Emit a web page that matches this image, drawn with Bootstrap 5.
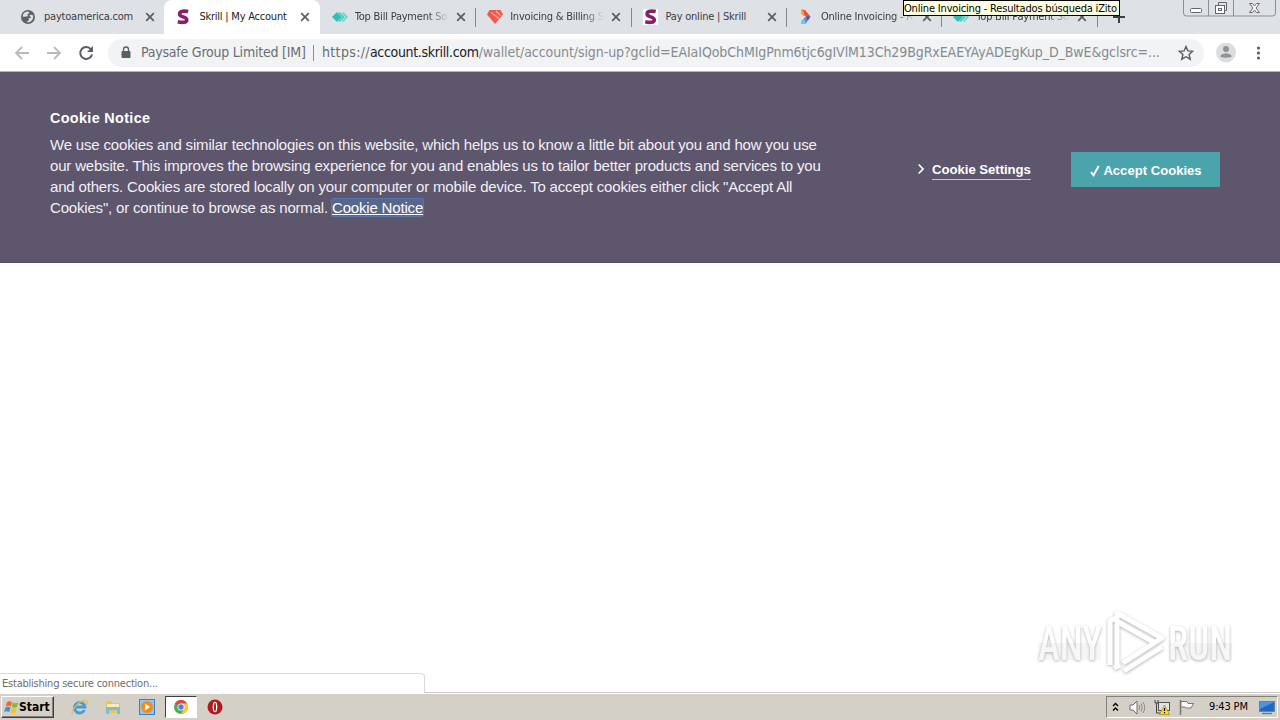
<!DOCTYPE html>
<html lang="en">
<head>
    <meta charset="UTF-8">
    <meta name="viewport" content="width=device-width, initial-scale=1.0">
    <title>Skrill | My Account</title>
    <link href="https://cdn.jsdelivr.net/npm/bootstrap@5.3.0/dist/css/bootstrap.min.css" rel="stylesheet">
    <style>
        body {
            width: 1280px;
            height: 720px;
            overflow: hidden;
            background: #fff;
            font-family: "DejaVu Sans Condensed", "DejaVu Sans", sans-serif;
            font-stretch: condensed;
        }
        svg {
            display: block;
            flex: none;
        }
        /* tab strip */
        .tab-strip {
            height: 34px;
            background: #dee1e6;
            padding-left: 9px;
        }
        .browser-tab {
            width: 155.4px;
            height: 34px;
            flex: none;
            padding-left: 12px;
            font-size: 11px;
            color: #3c4043;
            position: relative;
        }
        .browser-tab.current {
            background: #fff;
            border-radius: 8px 8px 0 0;
            color: #222;
        }
        .browser-tab.divided::after {
            content: "";
            position: absolute;
            right: -1px;
            top: 8px;
            width: 1px;
            height: 19px;
            background: #85888d;
        }
        .tab-icon {
            width: 16px;
        }
        .tab-title {
            width: 94px;
            margin-left: 7px;
            margin-right: 3px;
            white-space: nowrap;
            overflow: hidden;
            letter-spacing: -0.22px;
        }
        .tab-title.faded {
            -webkit-mask-image: linear-gradient(90deg, #000 78%, transparent 100%);
            mask-image: linear-gradient(90deg, #000 78%, transparent 100%);
        }
        .tooltip-box {
            position: absolute;
            left: 903px;
            top: 0;
            width: 217px;
            height: 16px;
            background: #ffffe1;
            border: 1px solid #000;
            font-size: 11px;
            line-height: 15px;
            color: #000;
            white-space: nowrap;
            letter-spacing: -0.18px;
            z-index: 2;
        }
        .window-buttons {
            position: absolute;
            left: 1183px;
            top: 0;
            z-index: 2;
        }
        /* toolbar */
        .toolbar {
            height: 38px;
            border-bottom: 1px solid #b5b4b9;
            padding-left: 14px;
        }
        .address {
            width: 1096px;
            height: 28px;
            margin-left: 14px;
            border-radius: 14px;
            background: #f1f3f4;
            padding-left: 9px;
            font-size: 14px;
            color: #868b91;
            white-space: nowrap;
        }
        .site-name {
            width: 172px;
            margin-left: 10px;
            color: #6a6e73;
            letter-spacing: -0.22px;
        }
        .bar-line {
            width: 1px;
            height: 16px;
            background: #8d9196;
        }
        .url-text {
            width: 848px;
            margin-left: 8px;
        }
        .url-text .scheme { color: #6a6e73; letter-spacing: 0.35px; }
        .url-text .host { color: #202124; letter-spacing: -0.33px; }
        .url-text .path { letter-spacing: -0.08px; }
        /* cookie banner */
        .cookie-banner {
            height: 191px;
            background: #5e566c;
            color: #fff;
            padding: 36px 60px 0 50px;
            font-family: "Liberation Sans", Arial, sans-serif;
            font-size: 15px;
            line-height: 21px;
            border-bottom: 1px solid #574e62;
        }
        .cookie-banner .heading {
            font-size: 14.4px;
            font-weight: bold;
            letter-spacing: 0.34px;
            margin-bottom: 5px;
            color: #fff;
        }
        .cookie-copy {
            width: 800px;
            color: #f1eff4;
            white-space: nowrap;
            letter-spacing: -0.178px;
        }
        .notice-link {
            color: #fff;
            text-decoration: underline;
            background: #59668a;
            outline: 1px solid #5576b2;
            border-radius: 1px;
        }
        .cookie-actions {
            margin-top: 44px;
            font-size: 13.2px;
            font-weight: bold;
        }
        .chevron {
            margin: 8px 8px 0 0;
        }
        .settings-link {
            border-bottom: 1px solid #c9c4d0;
            line-height: 20px;
            height: 20px;
            width: 99px;
            letter-spacing: -0.05px;
            white-space: nowrap;
        }
        .accept-btn {
            width: 149px;
            height: 35px;
            margin-left: 40px;
            background: #4ba4ac;
            border: 0;
            border-radius: 0;
            padding: 2px 0 0 1px;
            color: #fff;
            font-size: 13.1px;
            font-weight: bold;
            white-space: nowrap;
        }
        .accept-btn svg { margin-right: 3px; }
        /* page area */
        .page-area { height: 429px; }
        .watermark {
            position: absolute;
            left: 1030px;
            top: 602px;
            filter: drop-shadow(0 1px 1.5px rgba(0, 0, 0, .3));
        }
        .status-bubble {
            position: absolute;
            left: 0;
            top: 673px;
            width: 425px;
            height: 20px;
            border: 1px solid #d9d9d9;
            border-left: 0;
            border-bottom: 0;
            border-top-right-radius: 4px;
            background: #fff;
            color: #6e6e6e;
            font-size: 11px;
            line-height: 19px;
            letter-spacing: -0.22px;
            padding-left: 2px;
        }
        /* taskbar */
        .taskbar {
            height: 28px;
            background: #d4cfc7;
            border-top: 1px solid #c8c8c4;
            box-shadow: inset 0 1px #fff;
            padding: 1px 2px 0 1px;
        }
        .start-btn {
            width: 53px;
            height: 22px;
            border: 1px solid;
            border-color: #fff #404040 #404040 #fff;
            box-shadow: inset -1px -1px #85817a;
            padding-left: 2px;
            font-size: 12px;
            font-weight: bold;
            color: #000;
        }
        .ie-icon, .folder-icon { margin-left: 17px; }
        .media-icon { margin-left: 18px; }
        .task-active {
            width: 32px;
            height: 22px;
            margin-left: 10px;
            background: #fff;
            border: 1px solid;
            border-color: #404040 #fff #fff #404040;
        }
        .opera-icon { margin-left: 10px; }
        .tray {
            width: 172px;
            height: 22px;
            border: 1px solid;
            border-color: #858079 #fff #fff #858079;
            padding-left: 5px;
            font-size: 11px;
            color: #000;
        }
        .sound-icon { margin-left: 10px; }
        .net-icon, .flag-icon { margin-left: 8px; }
        .clock {
            width: 40px;
            margin-left: 14px;
            white-space: nowrap;
            letter-spacing: -0.15px;
        }
        .screen-icon { margin-left: 10px; }
    </style>
</head>
<body>
    <!-- shared icons -->
    <svg width="0" height="0" class="position-absolute">
        <defs>
            <symbol id="close" viewBox="0 0 10 10"><path d="M1.2 1.2l7.6 7.6M8.8 1.2L1.2 8.8" stroke="#5a5d62" stroke-width="1.7"/></symbol>
            <symbol id="skrill" viewBox="0 0 14 16"><path d="M12.2 2.6C8.600 1.700 3.600 1.700 3.600 5c0 3.500 7.200 2.200 7.200 5.700 0 3.300-5.200 3-9 2.100" fill="none" stroke="#862165" stroke-width="3.600"/></symbol>
            <symbol id="diamonds" viewBox="0 0 16 12"><path d="M0 6l5-5 5 5-5 5z" fill="#2fbfb5"/><path d="M6.500 2l1.300-1 5 5-5 5-1.300-1 4-4z" fill="#45cbc2"/><path d="M10 2l1.200-1 4.800 5-4.800 5L10 10l3.700-4z" fill="#62d5cc"/></symbol>
        </defs>
    </svg>

    <div class="tab-strip d-flex">
        <div class="browser-tab d-flex align-items-center">
            <div class="tab-icon">
                <svg width="14" height="14" viewBox="0 0 14 14"><circle cx="7" cy="7" r="7" fill="#5f6368"/><path d="M1.600 6.200C2 3.500 4.200 1.700 6.500 1.600c1 .1 1.900.5 1.700 1.300-.3.900-1.500.6-1.700 1.500-.1.700.7.800.3 1.500-.6.800-1.900.2-2.700.7-.6.400-1.700.3-2.500-.4zM8.600 5.200c1-.8 2.700-.5 3.600.3.500 2.700-.8 5.200-3.300 6.400-1 .4-2 .5-2.900.4 0-1.300.8-1.400 1.600-1.900.6-.5-.4-1.600.4-2.200.7-.4 1.900.3 1.900-.7 0-.9-1.600-1-1.300-2.300z" fill="#dee1e6"/></svg>
            </div>
            <div class="tab-title">paytoamerica.com</div>
            <svg class="ms-1" width="10" height="10"><use href="#close"/></svg>
        </div>
        <div class="browser-tab current d-flex align-items-center">
            <div class="tab-icon"><svg width="14" height="16"><use href="#skrill"/></svg></div>
            <div class="tab-title">Skrill | My Account</div>
            <svg class="ms-1" width="10" height="10"><use href="#close"/></svg>
        </div>
        <div class="browser-tab divided d-flex align-items-center">
            <div class="tab-icon"><svg width="16" height="12"><use href="#diamonds"/></svg></div>
            <div class="tab-title faded">Top Bill Payment So</div>
            <svg class="ms-1" width="10" height="10"><use href="#close"/></svg>
        </div>
        <div class="browser-tab divided d-flex align-items-center">
            <div class="tab-icon">
                <svg width="16" height="14" viewBox="0 0 16 14"><path d="M2.500 0h11L16 4.500 8 14 0 4.500z" fill="#ef5a4c"/><path d="M4 2.500l8 6M9 1l4.500 4.500" stroke="#ffb3a8" stroke-width="1.100"/></svg>
            </div>
            <div class="tab-title faded">Invoicing &amp; Billing S</div>
            <svg class="ms-1" width="10" height="10"><use href="#close"/></svg>
        </div>
        <div class="browser-tab divided d-flex align-items-center">
            <div class="tab-icon"><svg class="bg-white" width="15" height="16"><use href="#skrill"/></svg></div>
            <div class="tab-title">Pay online | Skrill</div>
            <svg class="ms-1" width="10" height="10"><use href="#close"/></svg>
        </div>
        <div class="browser-tab divided d-flex align-items-center">
            <div class="tab-icon">
                <svg width="16" height="16" viewBox="0 0 16 16"><path d="M3.500 0.500L7 1l5.500 6.500-4 .5-5-3.500z" fill="#f0503c"/><path d="M3.500 0.500L6 3v4.200L3.500 4.800z" fill="#f9a23a"/><path d="M12.500 7.500L7.500 15H3.500v-3L8 7.500z" fill="#4a8fd0"/><path d="M8 7.500h4.500L10 11.300z" fill="#6f3f8c"/><path d="M3.500 12L6 9.700 8 14l-1 1H3.500z" fill="#7cc2ee"/></svg>
            </div>
            <div class="tab-title faded">Online Invoicing - R</div>
            <svg class="ms-1" width="10" height="10"><use href="#close"/></svg>
        </div>
        <div class="browser-tab divided d-flex align-items-center">
            <div class="tab-icon"><svg width="16" height="12"><use href="#diamonds"/></svg></div>
            <div class="tab-title faded">Top Bill Payment So</div>
            <svg class="ms-1" width="10" height="10"><use href="#close"/></svg>
        </div>
        <svg class="align-self-center ms-3" width="12" height="12"><path d="M6 0v12M0 6h12" stroke="#3c4043" stroke-width="2"/></svg>
    </div>
    <div class="tooltip-box">Online Invoicing - Resultados búsqueda iZito</div>
    <svg class="window-buttons" width="94" height="18" viewBox="0 0 94 18">
        <path d="M.5 0v13q0 3 3 3h86q3 0 3-3V0M25.500 0v16M50.500 0v16" fill="none" stroke="#8b8e94"/>
        <rect x="7.500" y="8.500" width="11" height="4" rx="1" fill="#fff" stroke="#63666b"/>
        <path d="M35.500 5V2.500h8v8H42" fill="none" stroke="#63666b"/>
        <rect x="32.500" y="5.500" width="9" height="8" fill="#fff" stroke="#63666b"/>
        <rect x="35.500" y="8.500" width="3" height="2" fill="none" stroke="#63666b"/>
        <path d="M66.500 3.500h3l2 2.500 2-2.500h3L73 8l3.500 4.500h-3l-2-2.500-2 2.500h-3L70 8z" fill="#fff" stroke="#63666b"/>
    </svg>

    <div class="toolbar d-flex align-items-center">
        <svg width="16" height="14" viewBox="0 0 16 14"><path d="M15 7H2M8 1L2 7l6 6" fill="none" stroke="#b8babd" stroke-width="1.800"/></svg>
        <svg class="ms-3" width="16" height="14" viewBox="0 0 16 14"><path d="M1 7h13M8 1l6 6-6 6" fill="none" stroke="#b8babd" stroke-width="1.800"/></svg>
        <svg class="ms-3" width="16" height="16" viewBox="0 0 16 16"><path d="M13 4.300A6 6 0 1 0 14 9.500" fill="none" stroke="#5a5d61" stroke-width="2"/><path d="M15 1v6H9z" fill="#5a5d61"/></svg>
        <div class="address d-flex align-items-center">
            <svg class="ms-1" width="10" height="13" viewBox="0 0 10 13"><rect x=".5" y="5" width="9" height="7" rx="1" fill="#5a5d61"/><path d="M2.500 5.500V3.500a2.500 2.500 0 0 1 5 0v2" fill="none" stroke="#5a5d61" stroke-width="1.300"/></svg>
            <span class="site-name">Paysafe Group Limited [IM]</span>
            <span class="bar-line"></span>
            <span class="url-text"><span class="scheme">https://</span><span class="host">account.skrill.com</span><span class="path">/wallet/account/sign-up?gclid=EAIaIQobChMIgPnm6tjc6gIVlM13Ch29BgRxEAEYAyADEgKup_D_BwE&amp;gclsrc=...</span></span>
            <svg class="ms-2" width="16" height="16" viewBox="0 0 16 16"><path d="M8 1.500l1.900 4.400 4.800.4-3.600 3.200 1.100 4.700L8 11.700l-4.200 2.500 1.100-4.700L1.300 6.300l4.800-.4z" fill="none" stroke="#5a5d61" stroke-width="1.400"/></svg>
        </div>
        <svg class="ms-2" width="28" height="20" viewBox="0 0 28 20"><circle cx="14" cy="9.500" r="10" fill="#dcdddf"/><circle cx="14" cy="6" r="3" fill="#909295"/><path d="M8.500 13.500c0-4 11-4 11 0 0 1.500-11 1.500-11 0z" fill="#909295"/></svg>
        <svg class="ms-3" width="6" height="16" viewBox="0 0 6 16"><g fill="#5a5d61"><circle cx="2.500" cy="3" r="1.600"/><circle cx="2.500" cy="8" r="1.600"/><circle cx="2.500" cy="13" r="1.600"/></g></svg>
    </div>

    <div class="cookie-banner d-flex">
        <div class="cookie-copy">
            <div class="heading">Cookie Notice</div>
            <div>We use cookies and similar technologies on this website, which helps us to know a little bit about you and how you use</div>
            <div>our website. This improves the browsing experience for you and enables us to tailor better products and services to you</div>
            <div>and others. Cookies are stored locally on your computer or mobile device. To accept cookies either click "Accept All</div>
            <div>Cookies", or continue to browse as normal. <a href="#" class="notice-link">Cookie Notice</a></div>
        </div>
        <div class="cookie-actions d-flex align-items-start ms-auto">
            <svg class="chevron" width="6" height="20" viewBox="0 0 6 20"><path d="M.7 4.500L5 9 .7 13.500" fill="none" stroke="#fff" stroke-width="1.700"/></svg>
            <div class="settings-link mt-2">Cookie Settings</div>
            <button class="btn accept-btn d-flex align-items-center justify-content-center">
                <svg width="10" height="12" viewBox="0 0 10 12"><path d="M1 7l2.500 3.200L8.700 1" fill="none" stroke="#fff" stroke-width="2"/></svg>
                <span>Accept Cookies</span>
            </button>
        </div>
    </div>

    <main class="page-area"></main>
    <svg class="watermark" width="214" height="78" viewBox="0 0 214 78">
        <g fill="none" stroke="#fff" stroke-width="5" stroke-linejoin="round">
            <path d="M80 63V19l6-3"/>
            <path d="M84 66l6-3M94 69l38-24"/>
            <path d="M87 64V11l45 25-39 25M88 20l37 21"/>
        </g>
        <g font-family="Roboto" font-size="49" font-weight="500" fill="#fff">
            <text x="8" y="58" textLength="64" lengthAdjust="spacingAndGlyphs">ANY</text>
            <text x="138" y="58" textLength="64" lengthAdjust="spacingAndGlyphs">RUN</text>
        </g>
        <rect x="8" y="41" width="63" height="17" fill="#000" opacity=".03"/>
        <rect x="139" y="41" width="63" height="17" fill="#000" opacity=".03"/>
    </svg>
    <div class="status-bubble">Establishing secure connection...</div>

    <footer class="taskbar d-flex align-items-center">
        <div class="start-btn d-flex align-items-center">
            <svg width="15" height="15" viewBox="0 0 15 15"><path d="M3 2q2.500-1.500 5 0L6.800 6.500q-2.500-1.500-5 0z" fill="#ee6a2c"/><path d="M8.800 2.500q2.500 1.500 5.500 0L13 7q-3 1.500-5.300 0z" fill="#86b83d"/><path d="M1.500 7.500q2.500-1.500 5 0L5.200 12q-2.500-1.500-5 0z" fill="#3f8fd5"/><path d="M7.400 8q2.500 1.500 5.200 0l-1.300 4.500q-2.700 1.500-5.200 0z" fill="#f8bf2c"/></svg>
            <span>Start</span>
        </div>
        <svg class="ie-icon" width="17" height="17" viewBox="0 0 17 17"><path d="M13.500 11A5.300 5.300 0 1 1 14 8H5" fill="none" stroke="#3d9fde" stroke-width="2.800"/><path d="M1.500 15C-1 11 11-1 15.500 2c1 1 .5 2.500-.3 4" fill="none" stroke="#e7bf46" stroke-width="1.300"/></svg>
        <svg class="folder-icon" width="16" height="16" viewBox="0 0 16 16"><path d="M1 2h5l1 2h8v10H1z" fill="#e7c75c"/><path d="M2 5h12v5H2z" fill="#fbeeb0"/><path d="M1 8h14v7h-3v-4H4v4H1z" fill="#78bde0"/></svg>
        <svg class="media-icon" width="16" height="16" viewBox="0 0 16 16"><rect x=".5" y=".5" width="15" height="15" fill="#8ec5ed" stroke="#3c82bd"/><circle cx="8" cy="8" r="6" fill="#f58b1f"/><path d="M6 4.500l5 3.500-5 3.500z" fill="#fff"/></svg>
        <div class="task-active d-flex align-items-center justify-content-center">
            <svg width="14" height="14" viewBox="0 0 14 14"><circle cx="7" cy="7" r="7" fill="#4aae4f"/><path d="M7 7L.94 3.500A7 7 0 0 1 13.060 3.500H7z" fill="#df4638"/><path d="M7 3.500h6.060A7 7 0 0 1 7 14l3-5.200z" fill="#f6ca3d"/><circle cx="7" cy="7" r="3.500" fill="#fff"/><circle cx="7" cy="7" r="2.700" fill="#4584ee"/></svg>
        </div>
        <svg class="opera-icon" width="16" height="16" viewBox="0 0 16 16"><circle cx="8" cy="8" r="7.500" fill="#b11a1d"/><ellipse cx="8" cy="8" rx="2.300" ry="5.300" fill="#fff"/><ellipse cx="8" cy="8" rx=".9" ry="4.300" fill="#7d1215"/></svg>
        <div class="tray d-flex align-items-center ms-auto">
            <svg width="7" height="10" viewBox="0 0 7 10"><path d="M1 4l2.500-2.500L6 4M1 8.500L3.500 6 6 8.500" fill="none" stroke="#000" stroke-width="1.400"/></svg>
            <svg class="sound-icon" width="17" height="15" viewBox="0 0 17 15"><path d="M1 5h3l4-4v13l-4-4H1z" fill="#fff" stroke="#6e6e6e"/><path d="M10 5q1.500 2.500 0 5M12 3.500q2.500 4 0 8M14 2q3.500 5.500 0 11" fill="none" stroke="#8b8b8b"/></svg>
            <svg class="net-icon" width="16" height="16" viewBox="0 0 16 16"><rect x="4.500" y="3.500" width="11" height="8" fill="#dce3e7" stroke="#555"/><path d="M1 1v3h3V1M2.500 4v10h4" fill="none" stroke="#444"/><path d="M10.500 6l5 9.500h-10z" fill="#ffdd21" stroke="#a58300" stroke-width=".7"/><path d="M10.500 9v3M10.500 13v1.300" stroke="#000" stroke-width="1.200"/></svg>
            <svg class="flag-icon" width="17" height="16" viewBox="0 0 17 16"><path d="M2.500 1v15" stroke="#777" stroke-width="1.500"/><path d="M3 2.500h6l1 2h5.500L13 9H8L7 8H3z" fill="#fff" stroke="#777"/></svg>
            <span class="clock">9:43 PM</span>
            <svg class="screen-icon" width="16" height="15" viewBox="0 0 16 15"><rect x=".5" y="1.500" width="15" height="10" fill="#2468bd" stroke="#5b87b5"/><path d="M1 2h14L1 9z" fill="#4d93df"/><path d="M3 13.500h10" stroke="#56809f" stroke-width="1.500"/></svg>
        </div>
    </footer>

    <script src="https://cdn.jsdelivr.net/npm/bootstrap@5.3.0/dist/js/bootstrap.bundle.min.js"></script>
</body>
</html>
